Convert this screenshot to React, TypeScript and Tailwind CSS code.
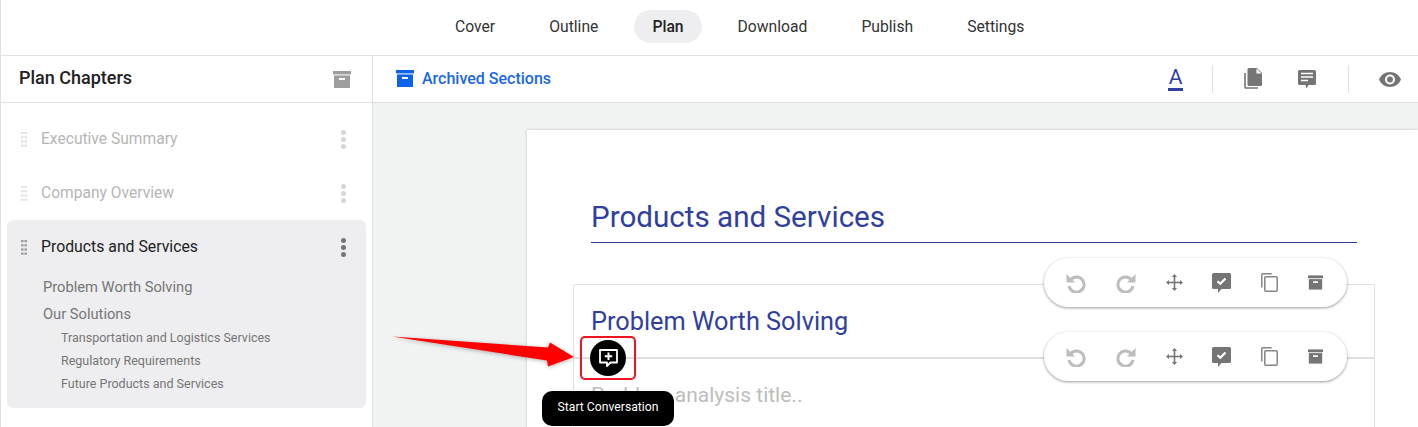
const NAV = ["Cover", "Outline", "Plan", "Download", "Publish", "Settings"];

function ArchiveIcon({ className }: { className?: string }) {
  return (
    <svg viewBox="0 0 18 17" className={className} fill="currentColor">
      <rect x="0" y="0" width="18" height="3.4" />
      <path d="M1 4.4h16V17H1z" />
      <rect x="6" y="7" width="6" height="2" fill="#fff" />
    </svg>
  );
}

function GripDots({ dark }: { dark?: boolean }) {
  const dots = [];
  for (let r = 0; r < 4; r++) {
    dots.push(<rect key={`a${r}`} x="0" y={r * 4.2} width="2.6" height="2.2" />);
    dots.push(<rect key={`b${r}`} x="3.4" y={r * 4.2} width="2.6" height="2.2" />);
  }
  return (
    <svg width="6" height="15" viewBox="0 0 6 15" fill={dark ? "#9c9c9c" : "#e0e0e0"} className="shrink-0">
      {dots}
    </svg>
  );
}

function Kebab({ dark }: { dark?: boolean }) {
  const dot = `w-[5px] h-[5px] rounded-full ${dark ? "bg-[#757575]" : "bg-[#d6d6d6]"}`;
  return (
    <div className="flex flex-col gap-[2px]">
      <span className={dot} />
      <span className={dot} />
      <span className={dot} />
    </div>
  );
}

function Chapter({ title }: { title: string }) {
  return (
    <div className="flex items-center h-[54px] pl-[20px] pr-[26px]">
      <GripDots />
      <span className="ml-[14px] mt-[2px] text-[15.6px] text-[#b5b5b5]">{title}</span>
      <div className="ml-auto">
        <Kebab />
      </div>
    </div>
  );
}

function Toolbar({ className }: { className: string }) {
  return (
    <div className={`absolute left-[671px] w-[303px] h-[49px] bg-white rounded-[25px] shadow-[0_1px_3px_rgba(0,0,0,0.4)] flex items-center justify-between pl-[22px] pr-[24px] ${className}`}>
      <svg width="20" height="20" viewBox="0 0 20 20" fill="none">
        <path d="M4.400 7A7.600 7.600 0 1 1 3 13" stroke="#bdbdbd" strokeWidth="3" />
        <path d="M0.500 1v8.500H9z" fill="#bdbdbd" />
      </svg>
      <svg width="20" height="20" viewBox="0 0 20 20" fill="none">
        <path d="M15.600 7A7.600 7.600 0 1 0 17 13" stroke="#bdbdbd" strokeWidth="3" />
        <path d="M19.500 1v8.500H11z" fill="#bdbdbd" />
      </svg>
      <svg width="17" height="17" viewBox="0 0 17 17" fill="#757575">
        <path d="M7.700 2h1.600v13H7.700z" />
        <path d="M2 7.700h13v1.600H2z" />
        <path d="M8.500 0l2.600 3H5.900zM8.500 17l-2.600-3h5.200zM0 8.500l3-2.600v5.200zM17 8.500l-3 2.600V5.900z" />
      </svg>
      <svg width="19" height="20" viewBox="0 0 19 20">
        <path d="M1.500 0h16A1.500 1.500 0 0 1 19 1.500v13a1.500 1.500 0 0 1-1.500 1.500H9.500L6 20v-4H1.500A1.500 1.500 0 0 1 0 14.500v-13A1.500 1.500 0 0 1 1.500 0z" fill="#757575" />
        <path d="M5.500 8.200l2.800 2.600 5.200-5.400" fill="none" stroke="#fff" strokeWidth="2.200" />
      </svg>
      <svg width="17" height="19" viewBox="0 0 17 19" fill="none" stroke="#858585" strokeWidth="1.500">
        <path d="M.8 14.500V1.600a.8.8 0 0 1 .8-.8h9.200" />
        <rect x="3.800" y="3.800" width="12.400" height="14.400" rx="1" />
      </svg>
      <ArchiveIcon className="w-[15px] h-[15px] text-[#757575]" />
    </div>
  );
}

export default function App() {
  return (
    <div className="relative h-[427px] w-[1418px] overflow-hidden bg-white border-l border-[#e0e0e0] text-[#333]" style={{ fontFamily: "Roboto, sans-serif" }}>
      {/* Top tabs */}
      <nav className="h-[56px] border-b border-[#e0e0e0] flex items-start pt-[10px] pl-[435px] gap-[16px]">
        {NAV.map((item) => (
          <a
            key={item}
            className={`h-[33px] flex items-center rounded-full text-[15.7px] ${
              item === "Plan" ? "mx-[1px] px-[18px] bg-[#eeeef0] font-medium text-[#222]" : "px-[19px]"
            }`}
          >
            {item}
          </a>
        ))}
      </nav>

      <div className="flex h-[371px]">
        {/* Sidebar */}
        <aside className="w-[372px] shrink-0 border-r border-[#e0e0e0]">
          <div className="h-[47px] border-b border-[#e0e0e0] flex items-center pl-[18px] pr-[21px]">
            <span className="text-lg font-medium text-[#212121] leading-none -mt-[3px]">Plan Chapters</span>
            <ArchiveIcon className="ml-auto w-[18px] h-[17px] text-[#9e9e9e] mt-[1px]" />
          </div>
          <div className="pt-[9px]">
            <Chapter title="Executive Summary" />
            <Chapter title="Company Overview" />
            <div className="mx-[6px] h-[188px] rounded-[6px] bg-[#eeeef0] pt-[9px]">
              <div className="flex items-center h-[36px] pl-[14px] pr-[20px]">
                <GripDots dark />
                <span className="ml-[14px] text-[15.8px] text-[#212121]">Products and Services</span>
                <div className="ml-auto">
                  <Kebab dark />
                </div>
              </div>
              <ul className="mt-[9px] pl-[36px] text-[#757575]">
                <li className="text-[14.7px] leading-[27px]">Problem Worth Solving</li>
                <li className="text-[14.7px] leading-[27px] mb-[-2px]">Our Solutions</li>
                <li className="text-[12.5px] leading-[23px] pl-[18px]">Transportation and Logistics Services</li>
                <li className="text-[12.5px] leading-[23px] pl-[18px]">Regulatory Requirements</li>
                <li className="text-[12.5px] leading-[23px] pl-[18px]">Future Products and Services</li>
              </ul>
            </div>
          </div>
        </aside>

        {/* Main area */}
        <main className="relative flex-1 min-w-0">
          <div className="h-[47px] border-b border-[#e0e0e0] flex items-center pl-[23px] pr-[17px]">
            <ArchiveIcon className="w-[18px] h-[17px] text-[#0d62ea] -mt-[2px]" />
            <span className="ml-[8px] text-base font-medium text-[#1a66e8]">Archived Sections</span>
            <div className="ml-auto flex items-center">
              <div className="flex flex-col items-center w-[15px]">
                <span className="text-[21px] leading-[20px] text-[#303f9f]">A</span>
                <span className="w-[15px] h-[3px] bg-[#303f9f] mt-[1px]" />
              </div>
              <span className="w-px h-[28px] bg-[#e0e0e0] ml-[29px]" />
              <svg className="ml-[31px] -mt-[1px]" width="18" height="21" viewBox="0 0 18 21">
                <path d="M1 5v14.200a.8.8 0 0 0 .8.8H14" fill="none" stroke="#757575" strokeWidth="1.600" />
                <path d="M5 0h8l5 5v11.500a1.500 1.500 0 0 1-1.500 1.500H5a1.500 1.500 0 0 1-1.500-1.500v-15A1.500 1.500 0 0 1 5 0z" fill="#757575" />
                <path d="M12.500 0.500v5h5z" fill="#fff" />
              </svg>
              <svg className="ml-[36px]" width="18" height="19" viewBox="0 0 18 19">
                <path d="M1.500 0h15A1.500 1.500 0 0 1 18 1.500v12a1.500 1.500 0 0 1-1.500 1.500H10.500l-1.900 3.500L7.500 15h-6A1.500 1.500 0 0 1 0 13.500v-12A1.500 1.500 0 0 1 1.500 0z" fill="#757575" />
                <path d="M3 3.500h12M3 7h12M3 10.500h7" stroke="#fff" strokeWidth="1.600" />
              </svg>
              <span className="w-px h-[28px] bg-[#e0e0e0] ml-[32px]" />
              <svg className="ml-[30px]" width="22" height="15" viewBox="0 0 22 15" fill="#757575">
                <path d="M11 0C6 0 1.700 3.100 0 7.500 1.700 11.900 6 15 11 15s9.300-3.100 11-7.500C20.300 3.100 16 0 11 0zm0 12.500a5 5 0 1 1 0-10 5 5 0 0 1 0 10zm0-8a3 3 0 1 0 0 6 3 3 0 0 0 0-6z" />
              </svg>
            </div>
          </div>

          {/* Canvas with the document page */}
          <div className="h-[324px] bg-[#f1f3f3] pt-[27px] pl-[154px] overflow-hidden">
            <div className="h-[400px] bg-white shadow-[0_0_3px_rgba(0,0,0,0.2)] pt-[66px] pl-[46px] pr-[43px]">
              <h1 className="ml-[18px] mr-[18px] h-[47px] border-b border-[#303f9f] text-[29.6px] leading-[42px] text-[#303f9f]">
                Products and Services
              </h1>
              <div className="mt-[41px] h-[74px] border border-[#e0e0e0] rounded-t-[2px] pl-[17px] pt-[21px] text-[25.300px] leading-[32px] text-[#303f9f]">
                Problem Worth Solving
              </div>
              <div className="h-[120px] border-x border-t border-[#e0e0e0] pl-[17px] pt-[22px] text-[21px] leading-[28px] text-[#bdbdbd]">
                Problem analysis title..
              </div>
            </div>
          </div>

          {/* Floating section toolbars */}
          <Toolbar className="top-[202px]" />
          <Toolbar className="top-[276px]" />

          {/* Annotation: arrow, highlight, button and tooltip */}
          <svg className="absolute left-[19px] top-[279px] drop-shadow-[0_1px_2px_rgba(0,0,0,0.3)]" width="186" height="36" viewBox="0 0 186 36">
            <path d="M0 1.500L156 12.500 158 7.500 182 22 156 31.500 155 25.500z" fill="#ff0000" />
          </svg>
          <div className="absolute left-[207px] top-[280px] w-[56px] h-[44px] border-2 border-[#f01420] rounded-[5px] flex items-center justify-center">
            <div className="w-[36px] h-[36px] rounded-full bg-black flex items-center justify-center">
              <svg width="19" height="18" viewBox="0 0 19 18" fill="none" stroke="#fff" strokeWidth="1.800">
                <path d="M1 1h17v12.500h-6.500L8 17v-3.500H1z" strokeLinejoin="round" />
                <path d="M9.500 3.500v7.500M5.800 7.200h7.400" strokeWidth="2" />
              </svg>
            </div>
          </div>
          <div className="absolute left-[169px] top-[335px] w-[132px] h-[35px] rounded-[10px] bg-black text-white text-[12.2px] pb-[2px] flex items-center justify-center">
            Start Conversation
          </div>
        </main>
      </div>
    </div>
  );
}
